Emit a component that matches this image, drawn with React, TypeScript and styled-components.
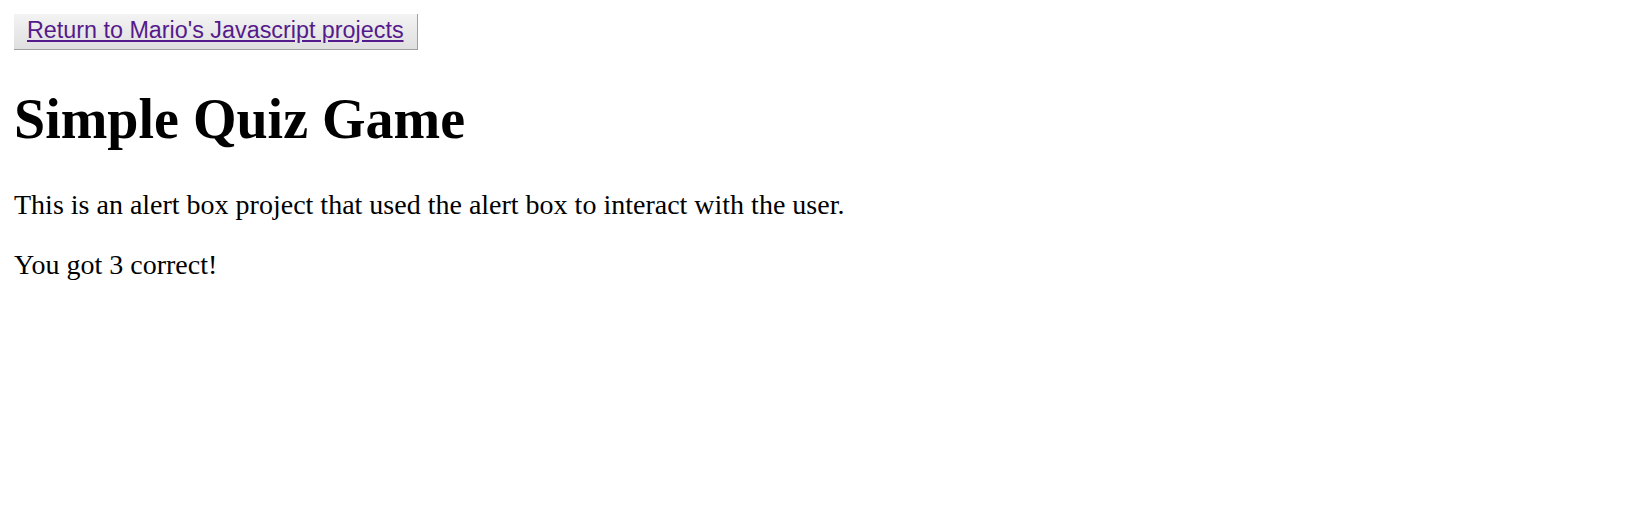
import React from "react";
import styled, { createGlobalStyle } from "styled-components";

const Global = createGlobalStyle`
  html, body { background: #ffffff; }
  body {
    margin: 14px;
    font-family: "Liberation Serif", "Times New Roman", serif;
    font-size: 28px;
    color: #000000;
  }
`;

const Page = styled.div`
  display: block;
`;

const BackButton = styled.button`
  display: inline-block;
  margin: -2px 0 0 -1px;
  padding: 4px 13px 5px 13px;
  border: 1px solid #a0a0a0;
  border-radius: 0;
  background: linear-gradient(#f4f4f4, #dfdfdf);
  font-family: "Liberation Sans", Arial, sans-serif;
  font-size: 23.33px;
  line-height: 1.15;
  cursor: pointer;
  vertical-align: top;
`;

const BackLink = styled.a`
  color: #551a8b;
  text-decoration: underline;
`;

const Title = styled.h1`
  font-size: 56px;
  font-weight: bold;
  margin: 37.5px 0;
`;

const Text = styled.p`
  margin: 28px 0;
  font-size: 28px;
`;

export default function App() {
  return (
    <>
      <Global />
      <Page>
        <BackButton>
          <BackLink href="#">Return to Mario's Javascript projects</BackLink>
        </BackButton>
        <Title>Simple Quiz Game</Title>
        <Text>This is an alert box project that used the alert box to interact with the user.</Text>
        <Text>You got 3 correct!</Text>
      </Page>
    </>
  );
}
